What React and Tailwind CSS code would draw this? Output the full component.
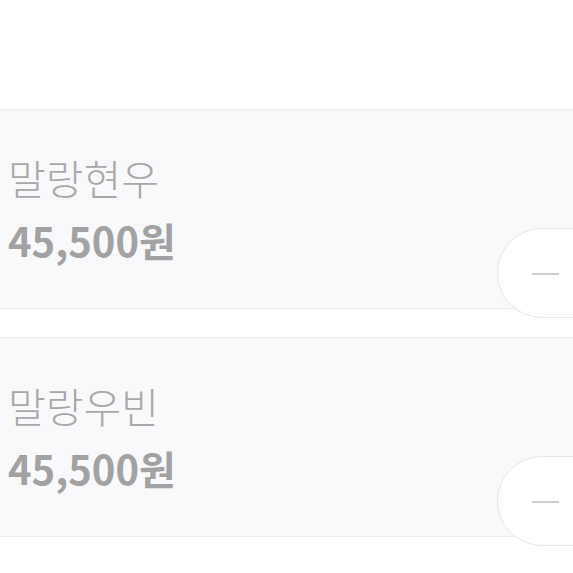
import * as React from "react"

const items = [
  { name: "말랑현우", price: "45,500원" },
  { name: "말랑우빈", price: "45,500원" },
]

function MinusButton() {
  return (
    <button className="absolute left-[497px] bottom-[-10px] h-[90px] w-[140px] rounded-full border border-[#e6e6e6] bg-white flex items-center pl-[34px] pt-[2px]">
      <span className="block h-[2px] w-[27px] bg-[#cfcfcf]" />
    </button>
  )
}

export default function App() {
  return (
    <div
      className="w-[573px] h-[573px] overflow-hidden bg-white pt-[109px] flex flex-col gap-[28px]"
      style={{ fontFamily: '"Noto Sans CJK KR", "Noto Sans", sans-serif' }}
    >
      {items.map((item) => (
        <div
          key={item.name}
          className="relative h-[200px] border-y border-[#ececec] bg-[#f8f9fb] pl-[8px] pt-[40px]"
        >
          <div className="text-[41px] leading-[54px] text-[#a8a8a8] font-light">{item.name}</div>
          <div className="mt-[10px] text-[40px] leading-[52px] font-semibold text-[#a2a2a2]">
            {item.price}
          </div>
          <MinusButton />
        </div>
      ))}
    </div>
  )
}
